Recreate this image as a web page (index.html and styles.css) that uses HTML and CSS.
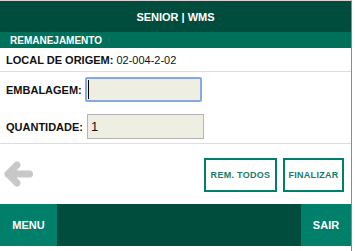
FILE: index.html
```html
<!DOCTYPE html>
<html lang="pt">
<head>
    <meta charset="UTF-8">
    <meta name="viewport" content="width=device-width, initial-scale=1.0">
    <title>Senior | WMS</title>
    <link rel="stylesheet" href="styles.css">
</head>
<body>
<div id="app">

    <div class="topbar">SENIOR | WMS</div>
    <div class="section-title">REMANEJAMENTO</div>

    <div class="origin-row">
        <b>LOCAL DE ORIGEM:</b>&nbsp;02-004-2-02
    </div>

    <div class="fields">
        <div class="field">
            <label for="embalagem">EMBALAGEM:</label>
            <span class="input-wrap">
                <input type="text" id="embalagem" class="text-input focused">
                <span class="caret"></span>
            </span>
        </div>
        <div class="field">
            <label for="quantidade">QUANTIDADE:</label>
            <input type="text" id="quantidade" class="text-input" value="1">
        </div>
    </div>

    <div class="actions">
        <svg class="back-arrow" width="36" height="30" viewBox="0 0 36 30">
            <path d="M8 14 L17 5 M8 14 L17 23 M8 14 H29.5" fill="none" stroke="#c8c8c8" stroke-width="7" stroke-linecap="round" stroke-linejoin="round"/>
        </svg>
        <div class="action-buttons">
            <button class="outline-button">REM. TODOS</button>
            <button class="outline-button">FINALIZAR</button>
        </div>
    </div>

    <div class="footer">
        <button class="footer-button menu">MENU</button>
        <button class="footer-button sair">SAIR</button>
    </div>

</div>
</body>
</html>
```

FILE: styles.css
```css
html, body {
    margin: 0;
    padding: 0;
    background-color: #ffffff;
}
body {
    font-family: "Liberation Sans", Arial, sans-serif;
    color: #111111;
}
#app {
    width: 351px;
    height: 250px;
    border-top: 1px solid #d4d4d4;
    border-right: 1px solid #8c8c8c;
    display: flex;
    flex-direction: column;
}
.topbar {
    height: 31px;
    background-color: #004d3d;
    color: white;
    font-weight: bold;
    font-size: 11px;
    display: flex;
    align-items: center;
    justify-content: center;
    padding-top: 1px;
    box-sizing: border-box;
}
.section-title {
    height: 16px;
    background-color: #00705b;
    color: white;
    font-weight: bold;
    font-size: 10px;
    padding-left: 10px;
    display: flex;
    align-items: center;
}
.origin-row {
    height: 23px;
    border-bottom: 1px solid #dddddd;
    font-size: 11px;
    padding: 0 6px;
    display: flex;
    align-items: center;
}
.fields {
    padding: 5px 6px 4px;
    border-bottom: 1px solid #dddddd;
    display: flex;
    flex-direction: column;
    gap: 12px;
}
.field {
    display: flex;
    align-items: center;
    gap: 3px;
    height: 25px;
}
.field label {
    font-weight: bold;
    font-size: 11px;
}
.input-wrap {
    position: relative;
    display: block;
}
.text-input {
    width: 117px;
    height: 25px;
    box-sizing: border-box;
    border: 1px solid #b4b4b4;
    background-color: #efeee3;
    font-family: "Liberation Sans", Arial, sans-serif;
    font-size: 13px;
    padding: 0 3px;
    margin: 0;
    outline: none;
    color: #111111;
}
.text-input.focused {
    border: 2px solid #86a9e4;
    border-radius: 2px;
}
.caret {
    position: absolute;
    left: 3px;
    top: 3px;
    width: 1px;
    height: 19px;
    background-color: #000000;
}
#quantidade {
    margin-left: 1px;
}
.actions {
    height: 60px;
    display: flex;
    align-items: center;
    justify-content: space-between;
    padding: 2px 7px 0 0;
    box-sizing: border-box;
}
.back-arrow {
    display: block;
}
.action-buttons {
    display: flex;
    gap: 6px;
}
.outline-button {
    height: 34px;
    background: white;
    border: 2px solid #00806a;
    color: #1b7a6c;
    font-family: "Liberation Sans", Arial, sans-serif;
    font-weight: bold;
    font-size: 9px;
    letter-spacing: 0.3px;
    padding: 0;
    cursor: pointer;
}
.outline-button:first-child {
    width: 73px;
}
.outline-button:last-child {
    width: 61px;
}
.footer {
    height: 42px;
    background-color: #004d3d;
    display: flex;
    justify-content: space-between;
}
.footer-button {
    background-color: #00806b;
    color: white;
    border: none;
    font-family: "Liberation Sans", Arial, sans-serif;
    font-weight: bold;
    font-size: 11px;
    padding: 0;
    cursor: pointer;
}
.footer-button.menu {
    width: 57px;
}
.footer-button.sair {
    width: 50px;
}
```
